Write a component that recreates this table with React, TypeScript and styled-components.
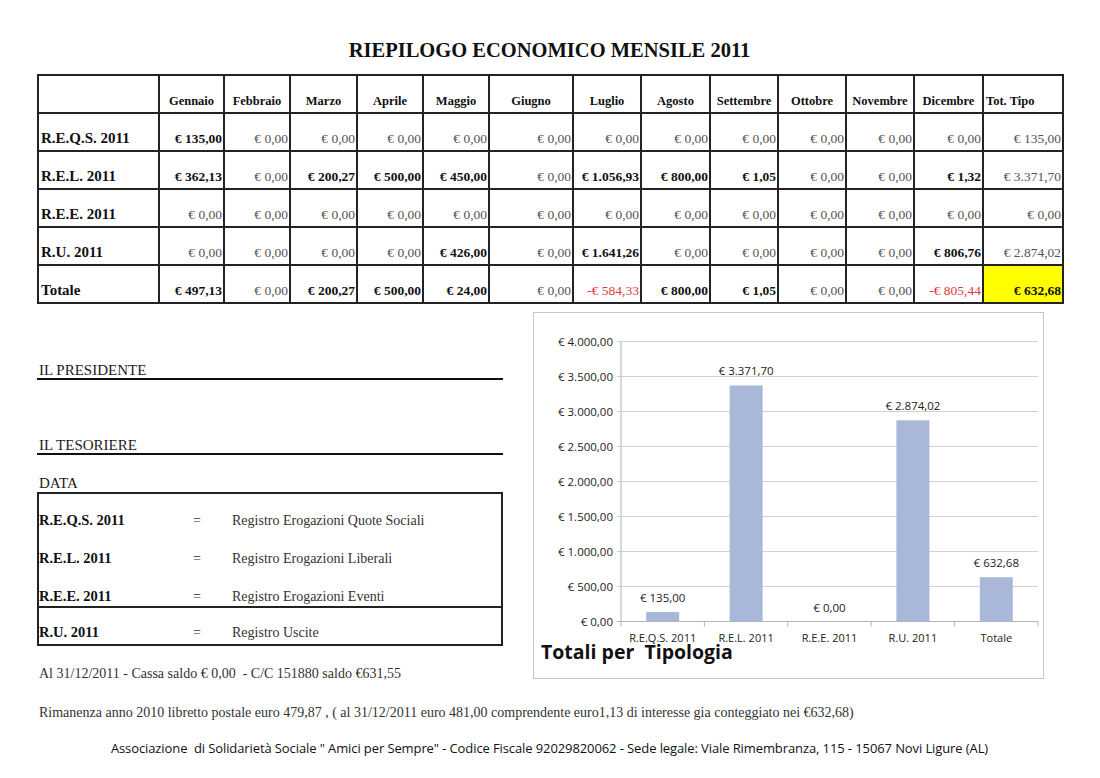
import React from "react";
import styled, { createGlobalStyle } from "styled-components";

type Kind = "n" | "b" | "neg" | "hl";

interface Cell {
  v: string;
  k: Kind;
}

interface SheetRow {
  label: string;
  cells: Cell[];
}

const c = (v: string, k: Kind = "n"): Cell => ({ v, k });
const z = c("€ 0,00");

const months = [
  "Gennaio",
  "Febbraio",
  "Marzo",
  "Aprile",
  "Maggio",
  "Giugno",
  "Luglio",
  "Agosto",
  "Settembre",
  "Ottobre",
  "Novembre",
  "Dicembre",
];

const colWidths = [121, 65, 66, 67, 66, 66, 84, 68, 69, 68, 68, 68, 69, 80];

const rows: SheetRow[] = [
  {
    label: "R.E.Q.S. 2011",
    cells: [c("€ 135,00", "b"), z, z, z, z, z, z, z, z, z, z, z, c("€ 135,00")],
  },
  {
    label: "R.E.L. 2011",
    cells: [
      c("€ 362,13", "b"),
      z,
      c("€ 200,27", "b"),
      c("€ 500,00", "b"),
      c("€ 450,00", "b"),
      z,
      c("€ 1.056,93", "b"),
      c("€ 800,00", "b"),
      c("€ 1,05", "b"),
      z,
      z,
      c("€ 1,32", "b"),
      c("€ 3.371,70"),
    ],
  },
  {
    label: "R.E.E. 2011",
    cells: [z, z, z, z, z, z, z, z, z, z, z, z, z],
  },
  {
    label: "R.U. 2011",
    cells: [
      z,
      z,
      z,
      z,
      c("€ 426,00", "b"),
      z,
      c("€ 1.641,26", "b"),
      z,
      z,
      z,
      z,
      c("€ 806,76", "b"),
      c("€ 2.874,02"),
    ],
  },
  {
    label: "Totale",
    cells: [
      c("€ 497,13", "b"),
      z,
      c("€ 200,27", "b"),
      c("€ 500,00", "b"),
      c("€ 24,00", "b"),
      z,
      c("-€ 584,33", "neg"),
      c("€ 800,00", "b"),
      c("€ 1,05", "b"),
      z,
      z,
      c("-€ 805,44", "neg"),
      c("€ 632,68", "hl"),
    ],
  },
];

const legend = [
  { code: "R.E.Q.S. 2011", text: "Registro Erogazioni Quote Sociali" },
  { code: "R.E.L. 2011", text: "Registro Erogazioni Liberali" },
  { code: "R.E.E. 2011", text: "Registro Erogazioni Eventi" },
  { code: "R.U. 2011", text: "Registro Uscite" },
];

const bars = [
  { name: "R.E.Q.S. 2011", value: 135, label: "€ 135,00" },
  { name: "R.E.L. 2011", value: 3371.7, label: "€ 3.371,70" },
  { name: "R.E.E. 2011", value: 0, label: "€ 0,00" },
  { name: "R.U. 2011", value: 2874.02, label: "€ 2.874,02" },
  { name: "Totale", value: 632.68, label: "€ 632,68" },
];

const ticks = [
  "€ 0,00",
  "€ 500,00",
  "€ 1.000,00",
  "€ 1.500,00",
  "€ 2.000,00",
  "€ 2.500,00",
  "€ 3.000,00",
  "€ 3.500,00",
  "€ 4.000,00",
];

const GlobalStyle = createGlobalStyle`
  html, body {
    margin: 0;
    padding: 0;
    background: #fff;
  }
  body {
    font-family: "Liberation Serif", "Times New Roman", serif;
    color: #1c1c1c;
  }
`;

const Page = styled.div`
  width: 1100px;
  height: 778px;
  box-sizing: border-box;
  padding: 38px 0 0 37px;
  overflow: hidden;
`;

const Title = styled.h1`
  width: 1025px;
  margin: 0 0 12px;
  text-align: center;
  font-size: 20.5px;
  line-height: 24px;
  font-weight: bold;
  color: #111;
`;

const Sheet = styled.table`
  width: 1025px;
  table-layout: fixed;
  border-collapse: collapse;
  border: 2px solid #222;
`;

const Row = styled.tr`
  height: 38px;
`;

const HeadCell = styled.th<{ $left?: boolean }>`
  padding: 0 2px 3px;
  border: 2px solid #222;
  vertical-align: bottom;
  text-align: ${(p) => (p.$left ? "left" : "center")};
  font-size: 12.5px;
  font-weight: bold;
  line-height: 16px;
  color: #111;
  white-space: nowrap;
`;

const LabelCell = styled.td`
  padding: 0 2px 3px;
  border: 2px solid #222;
  vertical-align: bottom;
  font-size: 15px;
  font-weight: bold;
  line-height: 18px;
  color: #111;
  white-space: nowrap;
`;

const ValueCell = styled.td<{ $kind: Kind }>`
  padding: 0 1px 3px 0;
  border: 2px solid #222;
  vertical-align: bottom;
  text-align: right;
  font-size: 13.5px;
  line-height: 17px;
  white-space: nowrap;
  font-weight: ${(p) => (p.$kind === "b" || p.$kind === "hl" ? "bold" : "normal")};
  color: ${(p) =>
    p.$kind === "neg" ? "#e0393b" : p.$kind === "n" ? "#555" : "#111"};
  background: ${(p) => (p.$kind === "hl" ? "#ffff00" : "transparent")};
`;

const Lower = styled.div`
  display: flex;
  align-items: flex-start;
  margin-top: 8px;
`;

const LeftCol = styled.div`
  width: 466px;
`;

const SignLine = styled.div<{ $gap: number }>`
  margin-top: ${(p) => p.$gap}px;
  padding-left: 2px;
  font-size: 15px;
  line-height: 16px;
  border-bottom: 2px solid #111;
`;

const Caption = styled.div<{ $gap: number }>`
  margin-top: ${(p) => p.$gap}px;
  padding-left: 2px;
  font-size: 15px;
  line-height: 16px;
`;

const Legend = styled.div`
  margin-top: 1px;
  border: 2px solid #222;
`;

const LegendRow = styled.div<{ $split?: boolean; $last?: boolean }>`
  display: grid;
  grid-template-columns: 154px 39px 1fr;
  align-items: end;
  height: ${(p) => (p.$last ? 36 : 38)}px;
  box-sizing: border-box;
  padding: 0 0 ${(p) => (p.$split ? 1 : 3)}px 0;
  border-bottom: ${(p) => (p.$split ? "2px solid #222" : "none")};
`;

const LegendCode = styled.span`
  font-size: 14.5px;
  font-weight: bold;
  line-height: 17px;
  color: #111;
`;

const LegendText = styled.span`
  font-size: 14px;
  line-height: 17px;
  color: #333;
`;

const Note = styled.div<{ $gap: number }>`
  margin-top: ${(p) => p.$gap}px;
  padding-left: 2px;
  font-size: 14px;
  line-height: 16px;
  color: #333;
  white-space: pre;
`;

const ChartBox = styled.div`
  width: 511px;
  height: 367px;
  margin-left: 30px;
  box-sizing: border-box;
  border: 1px solid #c6c6c6;
  background: #fff;
`;

const ChartSvg = styled.svg`
  display: block;
  font-family: "Open Sans", "Noto Sans", sans-serif;
`;

const Footer = styled.div`
  width: 1025px;
  margin-top: 19px;
  text-align: center;
  font-family: "Open Sans", "Noto Sans", sans-serif;
  font-size: 13px;
  line-height: 16px;
  letter-spacing: -0.1px;
  color: #111;
  white-space: pre;
`;

const Chart: React.FC = () => {
  const x0 = 87;
  const x1 = 504;
  const zeroY = 308.5;
  const scale = 0.07;
  const band = (x1 - x0) / bars.length;
  return (
    <ChartSvg width={509} height={365} viewBox="0 0 509 365">
      {ticks.map((t, i) => {
        const y = zeroY - i * 35;
        return (
          <g key={t}>
            <line
              x1={x0 - 4}
              x2={x1}
              y1={y}
              y2={y}
              stroke={i === 0 ? "#b4b4b4" : "#d2d2d2"}
              strokeWidth={1}
            />
            <text x={79} y={y + 4} fontSize={11.5} textAnchor="end" fill="#222">
              {t}
            </text>
          </g>
        );
      })}
      <line x1={x0} x2={x0} y1={zeroY - 280} y2={zeroY} stroke="#b4b4b4" />
      {bars.map((b, i) => (
        <line
          key={b.name + "tick"}
          x1={x0 + i * band}
          x2={x0 + i * band}
          y1={zeroY}
          y2={zeroY + 5}
          stroke="#b4b4b4"
        />
      ))}
      <line x1={x1} x2={x1} y1={zeroY} y2={zeroY + 5} stroke="#b4b4b4" />
      {bars.map((b, i) => {
        const cx = x0 + (i + 0.5) * band;
        const h = b.value * scale;
        return (
          <g key={b.name}>
            {h > 0 && (
              <rect x={cx - 16.5} y={zeroY - h} width={33} height={h} fill="#a9b8d9" />
            )}
            <text x={cx} y={zeroY - h - 10} fontSize={11.5} textAnchor="middle" fill="#222">
              {b.label}
            </text>
            <text x={cx} y={329} fontSize={11} textAnchor="middle" fill="#222">
              {b.name}
            </text>
          </g>
        );
      })}
      <text
        x={7}
        y={346}
        fontSize={19.5}
        fontWeight="bold"
        fill="#111"
        style={{ whiteSpace: "pre" }}
      >
        {"Totali per  Tipologia"}
      </text>
    </ChartSvg>
  );
};

const App: React.FC = () => {
  return (
    <Page>
      <GlobalStyle />
      <Title>RIEPILOGO ECONOMICO MENSILE 2011</Title>
      <Sheet>
        <colgroup>
          {colWidths.map((w, i) => (
            <col key={i} style={{ width: w }} />
          ))}
        </colgroup>
        <tbody>
          <Row>
            <HeadCell />
            {months.map((m) => (
              <HeadCell key={m}>{m}</HeadCell>
            ))}
            <HeadCell $left>Tot. Tipo</HeadCell>
          </Row>
          {rows.map((r) => (
            <Row key={r.label}>
              <LabelCell>{r.label}</LabelCell>
              {r.cells.map((cell, i) => (
                <ValueCell key={i} $kind={cell.k}>
                  {cell.v}
                </ValueCell>
              ))}
            </Row>
          ))}
        </tbody>
      </Sheet>

      <Lower>
        <LeftCol>
          <SignLine $gap={50}>IL PRESIDENTE</SignLine>
          <SignLine $gap={57}>IL TESORIERE</SignLine>
          <Caption $gap={20}>DATA</Caption>
          <Legend>
            {legend.map((l, i) => (
              <LegendRow
                key={l.code}
                $split={i === 2}
                $last={i === legend.length - 1}
              >
                <LegendCode>{l.code}</LegendCode>
                <LegendText>=</LegendText>
                <LegendText>{l.text}</LegendText>
              </LegendRow>
            ))}
          </Legend>
          <Note $gap={20}>
            {"Al 31/12/2011 - Cassa saldo € 0,00  - C/C 151880 saldo €631,55"}
          </Note>
        </LeftCol>
        <ChartBox>
          <Chart />
        </ChartBox>
      </Lower>

      <Note $gap={23}>
        {
          "Rimanenza anno 2010 libretto postale euro 479,87 , ( al 31/12/2011 euro 481,00 comprendente euro1,13 di interesse gia conteggiato nei €632,68)"
        }
      </Note>
      <Footer>
        {
          'Associazione  di Solidarietà Sociale " Amici per Sempre" - Codice Fiscale 92029820062 - Sede legale: Viale Rimembranza, 115 - 15067 Novi Ligure (AL)'
        }
      </Footer>
    </Page>
  );
};

export default App;
